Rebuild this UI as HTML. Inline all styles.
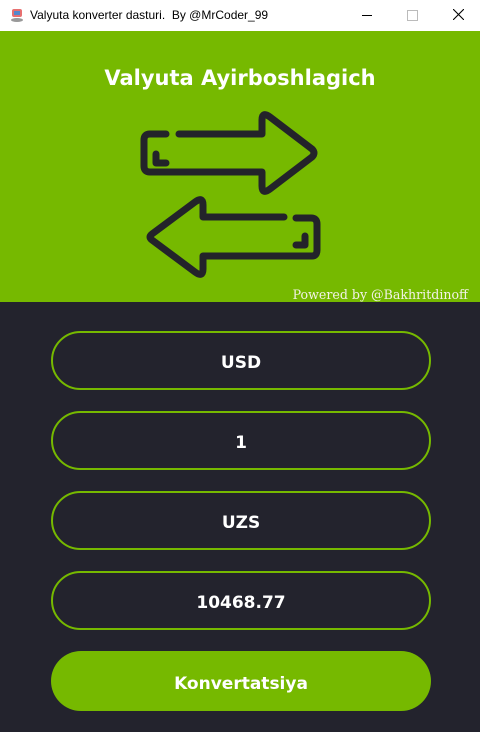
<!DOCTYPE html>
<html><head><meta charset="utf-8"><style>
body{margin:0;width:480px;height:732px;overflow:hidden;background:#23232d;font-family:"DejaVu Sans",sans-serif;position:relative}
.tb{position:absolute;left:0;top:0;width:480px;height:31px;background:#fff;font-family:"Liberation Sans",sans-serif;font-size:12px;color:#000}
.green{position:absolute;left:0;top:31px;width:480px;height:271px;background:#76b900}
h1{position:absolute;top:66px;left:0;width:480px;text-align:center;margin:0;color:#fff;font-size:21px;font-weight:bold}
.pw{position:absolute;right:12px;top:287px;color:#f2f2e6;font-family:"DejaVu Serif",serif;font-size:12.6px}
.f{position:absolute;left:51px;width:376px;height:55px;border:2px solid #76b900;border-radius:30px;color:#fff;font-weight:bold;font-size:17px;text-align:center;line-height:61px}
.btn{position:absolute;left:51px;top:651px;width:380px;height:60px;border-radius:30px;background:#76b900;color:#fff;font-weight:bold;font-size:17px;text-align:center;line-height:66px}
</style></head><body>
<div class="tb">
<svg style="position:absolute;left:10px;top:8px" width="14" height="14" viewBox="0 0 14 14"><rect x="2" y="1" width="10" height="8" rx="2" fill="#d33" opacity=".7"/><rect x="4" y="3" width="6" height="4" fill="#58c"/><ellipse cx="7" cy="12" rx="6" ry="2" fill="#999"/></svg>
<span style="position:absolute;left:30px;top:8px">Valyuta konverter dasturi.&nbsp; By @MrCoder_99</span>
<div style="position:absolute;left:362px;top:15px;width:10px;height:1px;background:#000"></div>
<div style="position:absolute;left:407px;top:10px;width:9px;height:9px;border:1px solid #bbb"></div>
<svg style="position:absolute;left:453px;top:9px" width="11" height="11"><path d="M0 0L11 11M11 0L0 11" stroke="#000" stroke-width="1.1"/></svg>
</div>
<div class="green"></div>
<h1>Valyuta Ayirboshlagich</h1>
<svg style="position:absolute;left:0;top:0" width="480" height="302" fill="none" stroke="#23232a" stroke-width="7" stroke-linecap="round" stroke-linejoin="round">
<path d="M166 134H150Q144 134 144 140V166Q144 172 150 172H262V186Q262 195 270 189L312 157Q316 153 312 149L270 117Q262 111 262 120V134H179"/>
<path d="M156 154V163H166"/>
<path d="M284 217H203V205Q203 196 195 202L152 234Q148 237 152 240L195 272Q203 278 203 269V256H312Q317 256 317 250V224Q317 218 311 218H296"/>
<path d="M305 236V245H296"/>
</svg>
<div class="pw">Powered by @Bakhritdinoff</div>
<div class="f" style="top:331px">USD</div>
<div class="f" style="top:411px">1</div>
<div class="f" style="top:491px">UZS</div>
<div class="f" style="top:571px">10468.77</div>
<div class="btn">Konvertatsiya</div>
</body></html>
